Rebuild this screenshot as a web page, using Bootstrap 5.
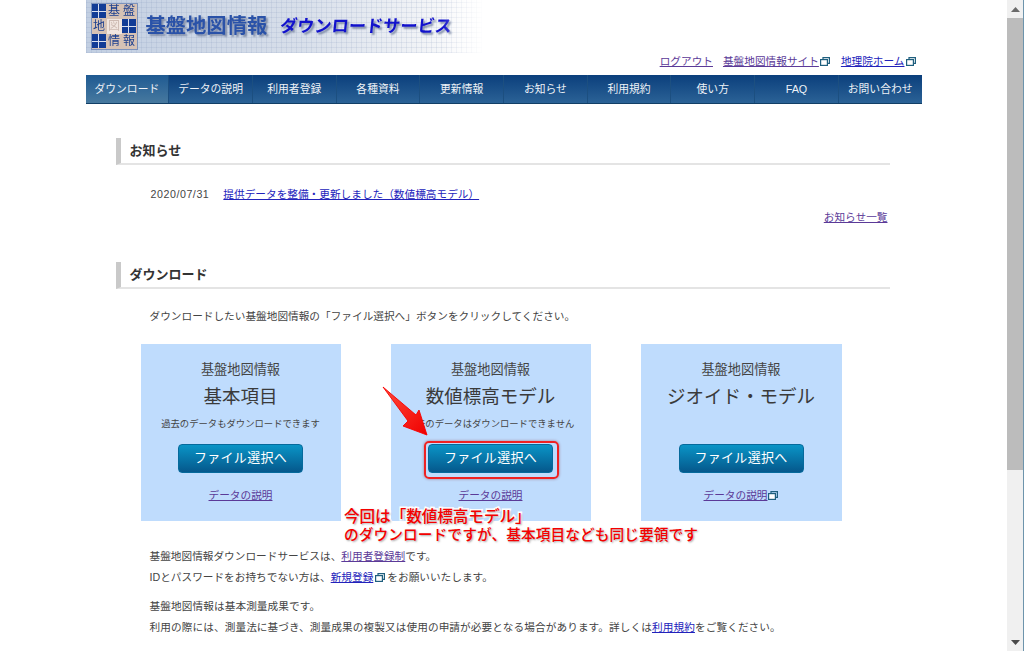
<!DOCTYPE html>
<html lang="ja">
<head>
  <meta charset="UTF-8" />
  <meta name="viewport" content="width=device-width, initial-scale=1" />
  <title>基盤地図情報 ダウンロードサービス</title>
  <link href="https://cdn.jsdelivr.net/npm/bootstrap@5.3.0/dist/css/bootstrap.min.css" rel="stylesheet" />
  <style>
    html, body { height: 651px; overflow: hidden; }
    body {
      background: #fff;
      color: #444;
      font-family: "Liberation Sans", "Noto Sans CJK JP", sans-serif;
      font-size: 10.67px;
      line-height: 16px;
    }
    a { color: #2222bb; }
    a.seen { color: #5b3a98; }
    .page-shell { height: 651px; }
    .page-main { position: relative; flex: 1 1 auto; min-width: 0; overflow: hidden; }
    .page-wrap { width: 836px; margin: 0 auto; }

    /* scrollbar */
    .fake-scroll { width: 17px; flex: none; background: #f0f0f0; border-right: 1px solid #6d94ac; }
    .scroll-btn { height: 18px; }
    .scroll-thumb { height: 452px; background: #bcbcbc; }
    .scroll-gap { flex: 1 1 auto; }

    /* banner */
    .banner {
      height: 53px;
      width: 396px;
      background:
        repeating-linear-gradient(90deg, rgba(120,140,180,.14) 0 1px, transparent 1px 5px),
        repeating-linear-gradient(0deg, rgba(120,140,180,.14) 0 1px, transparent 1px 5px),
        linear-gradient(90deg, #c2cfe2 0%, #d8dfea 55%, #f2f4f7 86%, #fff 100%);
      padding-left: 6px;
      -webkit-mask-image: linear-gradient(90deg, #000 90%, rgba(0,0,0,.1) 100%);
      mask-image: linear-gradient(90deg, #000 90%, rgba(0,0,0,.1) 100%);
    }
    .logo-mark {
      display: grid;
      grid-template-columns: repeat(3, 15px);
      grid-template-rows: repeat(3, 15px);
      background: #d6c2b5;
      outline: 1px solid #7d93bd;
      width: 45px;
      height: 45px;
      font-size: 12px;
      line-height: 15px;
      text-align: center;
      color: #1c3f8f;
    }
    .logo-mark span { display: block; }
    .logo-fill {
      background:
        linear-gradient(#d9e0f0, #d9e0f0) center / 100% 1px no-repeat,
        linear-gradient(#d9e0f0, #d9e0f0) center / 1px 100% no-repeat,
        #123c96;
      margin: 0 1px 1px 0;
    }
    .logo-mid { background: #f1e6e0; color: #cdbab2; }
    .logo-title {
      margin-left: 9px;
      font-size: 20.3px;
      font-weight: 700;
      color: #2a52a8;
      line-height: 53px;
      text-shadow: 2px 2px 2px #7d8aa6;
    }
    .logo-sub {
      display: inline-block;
      margin-left: 13px;
      font-size: 17.2px;
      font-weight: 700;
      transform: skewX(-6deg);
      color: #1212cc;
      line-height: 53px;
      text-shadow: 2px 2px 2px #7d8aa6;
    }

    .top-links { height: 22px; padding-right: 6px; }
    .top-logout { margin-right: 10px; }
    .top-links span + span { margin-left: 11px; }
    .ext-mark { width: 10px; height: 9px; margin-left: 1px; vertical-align: -1px; }
    .ext-wide { margin: 0 2px; }

    /* main nav */
    .main-menu {
      height: 29px;
      background: linear-gradient(#0b3f7c, #2b6296);
      border-bottom: 1px solid #123f66;
      flex-wrap: nowrap;
    }
    .main-menu .nav-item { flex: 1 1 0; border-right: 1px solid #1c4f80; }
    .main-menu .nav-item:last-child { border-right: 0; }
    .main-menu .nav-link {
      height: 28px;
      padding: 0;
      color: #eef2f7;
      font-size: 10.8px;
      line-height: 28px;
      white-space: nowrap;
    }
    .main-menu .nav-link.active {
      color: #eef2f7;
      background: linear-gradient(#1f5a92, #47799f);
    }

    /* sections */
    .sect-box { margin: 0 32px 0 30px; padding-top: 34px; }
    .sect-head {
      height: 27px;
      padding-left: 9px;
      border-left: 5px solid #c9c9c9;
      border-bottom: 2px solid #e4e4e4;
      font-size: 13px;
      font-weight: 700;
      line-height: 26px;
      color: #333;
      margin: 0;
    }
    .sect-head-next { margin-top: 37px; }
    .news-row { margin: 21px 0 0 35px; gap: 14px; }
    .news-date { letter-spacing: .55px; }
    .news-more { margin: 7px 2px 0 0; }
    .intro-text { margin: 19px 0 0 34px; }
    .dl-row { margin: 20px 0 0 25px; gap: 50px; }
    .dl-box {
      width: 200px;
      height: 177px;
      background: #bfdcfd;
      padding-top: 17px;
      color: #444;
    }
    .dl-box:last-child { width: 201px; }
    .dl-kicker { font-size: 13.2px; line-height: 18px; }
    .dl-title { font-size: 18.5px; line-height: 26px; margin-top: 5px; color: #3a3a3a; }
    .dl-note { font-size: 9.33px; line-height: 14px; height: 14px; margin-top: 7px; white-space: nowrap; }
    .dl-btn {
      display: block;
      width: 125px;
      height: 29px;
      margin: 13px auto 0;
      padding: 0;
      border: 1px solid #066a9c;
      border-radius: 4px;
      background: linear-gradient(#0a94c6, #05588c);
      color: #fff;
      font-size: 13px;
      line-height: 25px;
      letter-spacing: .3px;
    }
    .dl-link { margin-top: 14px; }
    .foot-text { margin: 25px 0 0 34px; }
    .foot-text p { margin: 0; line-height: 21px; white-space: nowrap; }
    .foot-text p + p { margin-top: 8px; letter-spacing: .08px; }

    /* screenshot annotations */
    .note-arrow { position: absolute; left: 0; top: 0; width: 1007px; height: 651px; pointer-events: none; }
    .note-frame {
      position: absolute;
      left: 424px;
      top: 441px;
      width: 135px;
      height: 38px;
      border: 2px solid #ee2222;
      border-radius: 5px;
      box-shadow: 0 0 3px rgba(120, 0, 0, .45);
    }
    .note-text {
      position: absolute;
      left: 344px;
      top: 508px;
      color: #f40000;
      font-size: 14.7px;
      font-weight: 500;
      line-height: 18px;
      letter-spacing: .08px;
      white-space: nowrap;
      -webkit-text-stroke: 3px #fff;
      paint-order: stroke fill;
      text-shadow: 1px 1px 2px rgba(0, 0, 0, .35);
    }
    .note-first { font-size: 15.6px; letter-spacing: -.05px; }
  </style>
</head>
<body>
  <div class="page-shell d-flex">
    <div class="page-main">
      <div class="page-wrap">
        <div class="banner d-flex align-items-center">
          <div class="logo-mark">
            <span class="logo-fill"></span><span>基</span><span>盤</span>
            <span>地</span><span class="logo-mid">図</span><span class="logo-fill"></span>
            <span class="logo-fill"></span><span>情</span><span>報</span>
          </div>
          <span class="logo-title">基盤地図情報</span>
          <span class="logo-sub">ダウンロードサービス</span>
        </div>

        <div class="top-links d-flex justify-content-end">
          <a class="seen top-logout" href="#">ログアウト</a>
          <span><a class="seen" href="#">基盤地図情報サイト</a><svg class="ext-mark" viewBox="0 0 10 9"><rect x="0.6" y="2.6" width="6.8" height="5.8" fill="#fff" stroke="#1f5f7e" stroke-width="1.2"/><path d="M3 2.500V.6h6.400v5.800H7.500" fill="none" stroke="#1f5f7e" stroke-width="1.2"/></svg></span>
          <span><a href="#">地理院ホーム</a><svg class="ext-mark" viewBox="0 0 10 9"><rect x="0.6" y="2.6" width="6.8" height="5.8" fill="#fff" stroke="#1f5f7e" stroke-width="1.2"/><path d="M3 2.500V.6h6.400v5.800H7.500" fill="none" stroke="#1f5f7e" stroke-width="1.2"/></svg></span>
        </div>

        <ul class="nav main-menu text-center mb-0">
          <li class="nav-item"><a class="nav-link active" href="#">ダウンロード</a></li>
          <li class="nav-item"><a class="nav-link" href="#">データの説明</a></li>
          <li class="nav-item"><a class="nav-link" href="#">利用者登録</a></li>
          <li class="nav-item"><a class="nav-link" href="#">各種資料</a></li>
          <li class="nav-item"><a class="nav-link" href="#">更新情報</a></li>
          <li class="nav-item"><a class="nav-link" href="#">お知らせ</a></li>
          <li class="nav-item"><a class="nav-link" href="#">利用規約</a></li>
          <li class="nav-item"><a class="nav-link" href="#">使い方</a></li>
          <li class="nav-item"><a class="nav-link" href="#">FAQ</a></li>
          <li class="nav-item"><a class="nav-link" href="#">お問い合わせ</a></li>
        </ul>

        <div class="sect-box">
          <h2 class="sect-head">お知らせ</h2>
          <div class="news-row d-flex">
            <span class="news-date">2020/07/31</span>
            <a href="#">提供データを整備・更新しました（数値標高モデル）</a>
          </div>
          <div class="news-more text-end"><a class="seen" href="#">お知らせ一覧</a></div>

          <h2 class="sect-head sect-head-next">ダウンロード</h2>
          <div class="intro-text">ダウンロードしたい基盤地図情報の「ファイル選択へ」ボタンをクリックしてください。</div>

          <div class="dl-row d-flex">
            <div class="dl-box text-center">
              <div class="dl-kicker">基盤地図情報</div>
              <div class="dl-title">基本項目</div>
              <div class="dl-note">過去のデータもダウンロードできます</div>
              <a class="btn dl-btn" href="#">ファイル選択へ</a>
              <div class="dl-link"><a class="seen" href="#">データの説明</a></div>
            </div>
            <div class="dl-box text-center">
              <div class="dl-kicker">基盤地図情報</div>
              <div class="dl-title">数値標高モデル</div>
              <div class="dl-note">過去のデータはダウンロードできません</div>
              <a class="btn dl-btn" href="#">ファイル選択へ</a>
              <div class="dl-link"><a class="seen" href="#">データの説明</a></div>
            </div>
            <div class="dl-box text-center">
              <div class="dl-kicker">基盤地図情報</div>
              <div class="dl-title">ジオイド・モデル</div>
              <div class="dl-note"></div>
              <a class="btn dl-btn" href="#">ファイル選択へ</a>
              <div class="dl-link"><a class="seen" href="#">データの説明</a><svg class="ext-mark" viewBox="0 0 10 9"><rect x="0.6" y="2.6" width="6.8" height="5.8" fill="#fff" stroke="#1f5f7e" stroke-width="1.2"/><path d="M3 2.500V.6h6.400v5.800H7.500" fill="none" stroke="#1f5f7e" stroke-width="1.2"/></svg></div>
            </div>
          </div>

          <div class="foot-text">
            <p>基盤地図情報ダウンロードサービスは、<a class="seen" href="#">利用者登録制</a>です。<br>
            IDとパスワードをお持ちでない方は、<a href="#">新規登録</a><svg class="ext-mark ext-wide" viewBox="0 0 10 9"><rect x="0.6" y="2.6" width="6.8" height="5.8" fill="#fff" stroke="#1f5f7e" stroke-width="1.2"/><path d="M3 2.500V.6h6.400v5.800H7.500" fill="none" stroke="#1f5f7e" stroke-width="1.2"/></svg>をお願いいたします。</p>
            <p>基盤地図情報は基本測量成果です。<br>
            利用の際には、測量法に基づき、測量成果の複製又は使用の申請が必要となる場合があります。詳しくは<a href="#">利用規約</a>をご覧ください。</p>
          </div>
        </div>
      </div>

      <!-- annotations pasted over the screenshot -->
      <svg class="note-arrow" viewBox="0 0 1007 651">
        <defs>
          <linearGradient id="arrowRed" x1="0" y1="0" x2="1" y2="1">
            <stop offset="0" stop-color="#ff4a3a"/>
            <stop offset="1" stop-color="#f00000"/>
          </linearGradient>
        </defs>
        <polygon points="383,387 416,415 419,410 427,435 403,426 408,421" fill="url(#arrowRed)" stroke="#f80000" stroke-width=".9" stroke-linejoin="round"/>
      </svg>
      <div class="note-frame"></div>
      <div class="note-text"><span class="note-first">今回は「数値標高モデル」</span><br>のダウンロードですが、基本項目なども同じ要領です</div>
    </div>

    <div class="fake-scroll d-flex flex-column">
      <div class="scroll-btn d-flex align-items-center justify-content-center">
        <svg width="9" height="5" viewBox="0 0 9 5"><path d="M4.500 0L9 5H0z" fill="#6a6a6a"/></svg>
      </div>
      <div class="scroll-thumb"></div>
      <div class="scroll-gap"></div>
      <div class="scroll-btn d-flex align-items-center justify-content-center">
        <svg width="9" height="5" viewBox="0 0 9 5"><path d="M0 0h9L4.500 5z" fill="#4a4a4a"/></svg>
      </div>
    </div>
  </div>
  <script src="https://cdn.jsdelivr.net/npm/bootstrap@5.3.0/dist/js/bootstrap.bundle.min.js"></script>
</body>
</html>
